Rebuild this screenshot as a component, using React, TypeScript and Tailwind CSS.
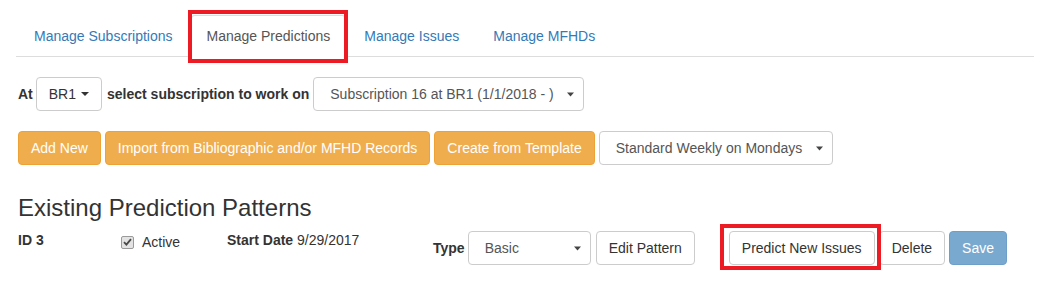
import React from "react";

const Arrow = () => (
  <svg width="7" height="5" viewBox="0 0 7 5" className="block">
    <path d="M0 0.5 L7 0.5 L3.5 4.5 Z" fill="#444" />
  </svg>
);

const Select = ({ text, w, arrowRight = 9 }: { text: string; w: string; arrowRight?: number }) => (
  <div className={`${w} h-[34px] border border-[#ccc] rounded-[4px] bg-white flex items-center relative pl-[16px] text-[#555] whitespace-nowrap`}>
    <span>{text}</span>
    <span className="absolute top-[14px]" style={{ right: arrowRight }}>
      <Arrow />
    </span>
  </div>
);

const BtnDefault = ({ children, className = "" }: { children: React.ReactNode; className?: string }) => (
  <div className={`h-[34px] px-[12px] border border-[#ccc] rounded-[4px] bg-white text-[#333] flex items-center whitespace-nowrap ${className}`}>
    {children}
  </div>
);

const BtnWarn = ({ children, className = "" }: { children: React.ReactNode; className?: string }) => (
  <div className={`h-[34px] px-[12px] border border-[#eea236] rounded-[4px] bg-[#f0ad4e] text-white flex items-center whitespace-nowrap ${className}`}>
    {children}
  </div>
);

export default function App() {
  const tabs = ["Manage Subscriptions", "Manage Predictions", "Manage Issues", "Manage MFHDs"];
  return (
    <div className="w-[1048px] h-[307px] bg-white font-['Liberation_Sans',Arial,sans-serif] text-[14px] leading-[20px] text-[#333] overflow-hidden">
      <div className="pl-[16px] pr-[14px] pt-[15px]">
        <ul className="flex border-b border-[#ddd] pl-[2px]">
          {tabs.map((t, i) => {
            const active = i === 1;
            return (
              <li key={t} className="relative -mb-px mr-[2px]">
                <div
                  className={`px-[15px] py-[10px] border rounded-t-[4px] whitespace-nowrap ${
                    active ? "border-[#ddd] border-b-transparent bg-white text-[#555]" : "border-transparent text-[#337ab7]"
                  }`}
                >
                  {t}
                </div>
                {active && (
                  <div className="absolute left-[-3px] top-[-5px] w-[160px] h-[53px] border-[4px] border-[#ed1c24] pointer-events-none" />
                )}
              </li>
            );
          })}
        </ul>

        <div className="pl-[2px]">
          <div className="mt-[20px] flex items-center">
            <span className="font-bold">At</span>
            <BtnDefault className="ml-[3px]">
              <span>BR1</span>
              <svg width="8" height="4" viewBox="0 0 8 4" className="ml-[5px]">
                <path d="M0 0 L8 0 L4 4 Z" fill="#333" />
              </svg>
            </BtnDefault>
            <span className="font-bold ml-[5px]">select subscription to work on</span>
            <div className="ml-[4px]">
              <Select text="Subscription 16 at BR1 (1/1/2018 - )" w="w-[271px]" />
            </div>
          </div>

          <div className="mt-[20px] flex items-center gap-[4px]">
            <BtnWarn>Add New</BtnWarn>
            <BtnWarn>Import from Bibliographic and/or MFHD Records</BtnWarn>
            <BtnWarn>Create from Template</BtnWarn>
            <Select text="Standard Weekly on Mondays" w="w-[234px]" />
          </div>

          <h3 className="mt-[30px] text-[24px] leading-[26px] font-normal text-[#333]">Existing Prediction Patterns</h3>

          <div className="mt-[9px] flex items-start">
            <div className="w-[103px] font-bold">ID 3</div>
            <div className="w-[106px] flex items-center mt-[2px]">
              <span className="w-[13px] h-[13px] rounded-[2px] border border-[#9a9a9a] bg-[#e3e3e3] flex items-center justify-center">
                <svg width="9" height="8" viewBox="0 0 9 8">
                  <path d="M1 4.2 L3.4 6.6 L8 1.2" stroke="#4a4a4a" strokeWidth="1.8" fill="none" />
                </svg>
              </span>
              <span className="ml-[8px]">Active</span>
            </div>
            <div className="w-[206px] whitespace-nowrap">
              <span className="font-bold">Start Date</span> 9/29/2017
            </div>
            <div className="flex items-center mt-[1px]">
              <span className="font-bold">Type</span>
              <div className="ml-[3px]">
                <Select text="Basic" w="w-[123px]" />
              </div>
              <BtnDefault className="ml-[5px]">Edit Pattern</BtnDefault>
              <div className="relative ml-[34px]">
                <BtnDefault>Predict New Issues</BtnDefault>
                <div className="absolute left-[-9px] top-[-7px] w-[161px] h-[46px] border-[4px] border-[#ed1c24] pointer-events-none" />
              </div>
              <BtnDefault className="ml-[4px]">Delete</BtnDefault>
              <div className="ml-[4px] h-[34px] px-[12px] border border-[#6e9fcb] rounded-[4px] bg-[#7aa9d0] text-white flex items-center">
                Save
              </div>
            </div>
          </div>
        </div>
      </div>
    </div>
  );
}
